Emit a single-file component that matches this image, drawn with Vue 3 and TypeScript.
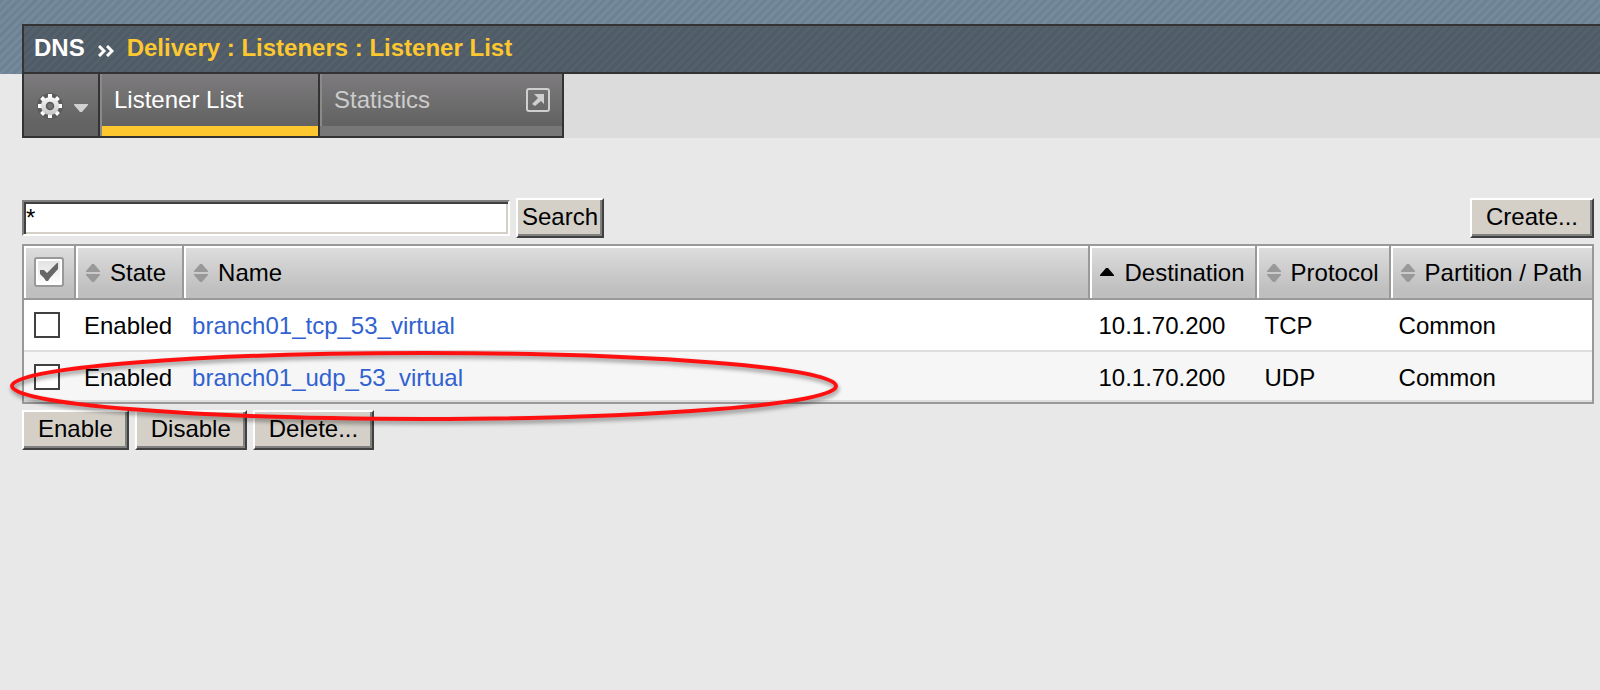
<script setup lang="ts">
import { ref } from 'vue'

interface Listener {
  id: string
  state: string
  name: string
  destination: string
  protocol: string
  partition: string
  selected: boolean
}

interface Column {
  key: string
  label: string
  sorted: boolean
}

const query = ref('*')

const columns: Column[] = [
  { key: 'state', label: 'State', sorted: false },
  { key: 'name', label: 'Name', sorted: false },
  { key: 'destination', label: 'Destination', sorted: true },
  { key: 'protocol', label: 'Protocol', sorted: false },
  { key: 'partition', label: 'Partition / Path', sorted: false },
]

const listeners = ref<Listener[]>([
  { id: 'tcp', state: 'Enabled', name: 'branch01_tcp_53_virtual', destination: '10.1.70.200', protocol: 'TCP', partition: 'Common', selected: false },
  { id: 'udp', state: 'Enabled', name: 'branch01_udp_53_virtual', destination: '10.1.70.200', protocol: 'UDP', partition: 'Common', selected: false },
])

const actions = ['Enable', 'Disable', 'Delete...']
const teeth = [0, 45, 90, 135, 180, 225, 270, 315]

function toggleAll(): void {
  const next = !listeners.value.every((l) => l.selected)
  listeners.value.forEach((l) => { l.selected = next })
}
</script>

<template>
  <div class="page">
    <header class="banner">
      <h1 class="crumbs">
        <span>DNS</span>
        <svg class="chevrons" width="16" height="12" viewBox="0 0 16 12" aria-hidden="true">
          <path d="M1 1l5 5-5 5M9 1l5 5-5 5" fill="none" stroke="#fff" stroke-width="3" />
        </svg>
        <span class="trail">Delivery : Listeners : Listener List</span>
      </h1>
    </header>

    <div class="tab-strip">
      <nav class="tabs" aria-label="Listener pages">
        <button class="gear" type="button" aria-label="Options">
          <svg width="28" height="28" viewBox="0 0 28 28" aria-hidden="true">
            <defs>
              <linearGradient id="gearFill" x1="0" y1="0" x2="0" y2="28" gradientUnits="userSpaceOnUse">
                <stop offset="0.1" stop-color="#ffffff" />
                <stop offset="1" stop-color="#b4b4b4" />
              </linearGradient>
            </defs>
            <circle cx="14" cy="14" r="11" fill="none" stroke="#5c5c5c" stroke-width="4" />
            <g fill="url(#gearFill)">
              <path
                v-for="angle in teeth"
                :key="angle"
                d="M12 6V2h4v4z"
                :transform="`rotate(${angle} 14 14)`"
              />
              <circle cx="14" cy="14" r="9" />
            </g>
            <circle cx="14" cy="14" r="3.500" fill="#727272" stroke="#5a5a5a" stroke-width="1.500" />
          </svg>
          <svg class="caret" width="14" height="8" viewBox="0 0 14 8" aria-hidden="true">
            <path d="M0 0h14v1L8 8H6L0 1z" fill="#d0d0d0" />
          </svg>
        </button>
        <a class="tab active" href="#list">Listener List</a>
        <a class="tab stats" href="#statistics">
          <span>Statistics</span>
          <svg width="24" height="24" viewBox="0 0 24 24" aria-hidden="true">
            <rect x="1" y="1" width="22" height="22" rx="2" fill="none" stroke="#cfcfcf" stroke-width="2" />
            <path d="M8 6h10v10l-3-3-6 5-3-2 6-6z" fill="#cfcfcf" />
          </svg>
        </a>
      </nav>
    </div>

    <main class="content">
      <form class="toolbar" @submit.prevent>
        <input v-model="query" class="search" type="text" aria-label="Search listeners" />
        <button class="btn find" type="submit">Search</button>
        <button class="btn create" type="button">Create...</button>
      </form>

      <div class="listing">
        <table class="grid">
          <thead>
            <tr>
              <th class="pick" scope="col">
                <button class="check-all" type="button" aria-label="Select all" @click="toggleAll">
                  <svg width="20" height="20" viewBox="0 0 20 20" aria-hidden="true">
                    <path d="M1 8h4l3 3 8-8 2-2h1v6l-8 9-2 3H7l-2-3-4-4z" fill="#666" />
                  </svg>
                </button>
              </th>
              <th v-for="col in columns" :key="col.key" scope="col" :class="col.key">
                <button class="sort" type="button">
                  <svg width="14" height="18" viewBox="0 0 14 18" aria-hidden="true">
                    <path v-if="col.sorted" d="M0 12v-1l6-7h2l6 7v1z" fill="#000" />
                    <path v-else d="M0 8V7l6-7h2l6 7v1zM0 10v1l6 7h2l6-7v-1z" fill="#999" />
                  </svg>
                  <span>{{ col.label }}</span>
                </button>
              </th>
            </tr>
          </thead>
          <tbody>
            <tr v-for="item in listeners" :key="item.id">
              <td class="pick">
                <input v-model="item.selected" class="box" type="checkbox" :aria-label="`Select ${item.name}`" />
              </td>
              <td>{{ item.state }}</td>
              <td><a class="name-link" :href="`#${item.id}`">{{ item.name }}</a></td>
              <td>{{ item.destination }}</td>
              <td>{{ item.protocol }}</td>
              <td>{{ item.partition }}</td>
            </tr>
          </tbody>
        </table>
        <svg class="marker" width="832" height="78" viewBox="0 0 832 78" aria-hidden="true">
          <ellipse cx="414" cy="36" rx="412" ry="33" fill="none" stroke="#ff1010" stroke-width="4" />
        </svg>
      </div>

      <div class="actions">
        <button v-for="action in actions" :key="action" class="btn" type="button">{{ action }}</button>
      </div>
    </main>
  </div>
</template>

<style>
body {
  margin: 0;
  background: #e8e8e8;
}
</style>

<style scoped>
.page {
  min-height: 100vh;
  background: #e8e8e8;
  color: #000;
  font: 24px/28px "Liberation Sans", Arial, sans-serif;
}

button,
input {
  box-sizing: border-box;
  margin: 0;
  font: inherit;
  color: inherit;
}

button {
  cursor: pointer;
}

.banner {
  padding: 24px 0 0 22px;
  background: repeating-linear-gradient(135deg, #6c8397 0 3px, #768a99 3px 6px);
}

.crumbs {
  display: flex;
  align-items: center;
  box-sizing: border-box;
  height: 50px;
  margin: 0;
  padding: 0 10px 2px;
  border: 2px solid #333;
  border-right: 0;
  background: repeating-linear-gradient(135deg, #4f5b66 0 3px, #54606a 3px 6px);
  color: #fff;
  font-size: 24px;
  font-weight: bold;
}

.chevrons {
  margin: 6px 13px 0;
}

.trail {
  color: #fdc82f;
}

.tab-strip {
  padding-left: 22px;
  background: linear-gradient(90deg, #e8e8e8 22px, #dcdcdc 22px);
}

.tabs {
  display: flex;
  width: fit-content;
  height: 62px;
  border: 2px solid #333;
  border-top: 0;
}

.gear {
  display: flex;
  align-items: center;
  gap: 10px;
  width: 74px;
  padding: 2px 10px 0 12px;
  border: 0;
  background: linear-gradient(#7d7b7d, #636363 80%);
}

.caret {
  margin-top: 4px;
}

.tab {
  display: flex;
  justify-content: space-between;
  box-sizing: border-box;
  padding: 12px 12px 0 14px;
  border-left: 2px solid #333;
  background:
    linear-gradient(#777, #777) bottom / 100% 10px no-repeat,
    linear-gradient(90deg, #8a8a8a, #8a8a8a) left / 2px 100% no-repeat,
    linear-gradient(#7d7b7d, #636363 80%);
  color: #ccc;
  text-decoration: none;
}

.tab.active {
  width: 220px;
  background:
    linear-gradient(90deg, #8a8a8a, #8a8a8a) left / 2px 100% no-repeat,
    linear-gradient(#fdc82f, #fdc82f) bottom / 100% 10px no-repeat,
    linear-gradient(#7d7b7d, #636363 80%);
  color: #fff;
}

.tab.stats {
  width: 244px;
}

.tab svg {
  margin-top: 2px;
}

.content {
  padding: 60px 6px 0 22px;
}

.toolbar {
  display: flex;
  align-items: center;
  gap: 6px;
  margin-bottom: 6px;
}

.search {
  width: 488px;
  height: 36px;
  padding: 0 2px;
  border: 2px solid;
  border-color: #808080 #fff #fff #808080;
  outline: 0;
  background: #fff;
  box-shadow: inset 2px 2px #404040, inset -2px -2px #d4d0c8;
}

.btn {
  height: 40px;
  padding: 0 14px 2px;
  border: 2px solid;
  border-color: #fff #404040 #404040 #fff;
  background: #d4d0c8;
  box-shadow: inset -2px -2px #808080;
}

.find {
  padding: 0 4px 2px;
}

.create {
  margin-left: auto;
}

.listing {
  position: relative;
}

.grid {
  width: 100%;
  border: 2px solid #999;
  border-spacing: 0;
  background: #fff;
}

th {
  height: 50px;
  padding: 2px 10px 0;
  border-right: 2px solid #999;
  border-bottom: 2px solid #999;
  background: linear-gradient(#dedede, #bfbfbf 85%);
  box-shadow: inset 2px 2px #fff;
  font-weight: normal;
  text-align: left;
  white-space: nowrap;
}

th:last-child {
  border-right: 0;
}

td {
  height: 48px;
  padding: 2px 12px 0 8px;
  border-bottom: 2px solid #ddd;
  white-space: nowrap;
}

tbody tr:nth-child(even) td {
  height: 44px;
  padding-top: 4px;
  background: #f6f6f6;
}

th.pick,
td.pick {
  width: 30px;
  padding: 0 10px;
}

tbody tr:nth-child(even) td.pick {
  padding-top: 2px;
}

th.name {
  width: 100%;
}

.sort {
  display: flex;
  align-items: center;
  gap: 10px;
  padding: 0;
  border: 0;
  background: none;
}

.check-all {
  display: grid;
  place-items: center;
  width: 30px;
  height: 30px;
  padding: 0;
  border: 2px solid #999;
  border-radius: 3px;
  background: linear-gradient(#e0e0e0, #fff);
  box-shadow: inset 0 0 0 2px #fff;
}

.box {
  display: block;
  appearance: none;
  width: 26px;
  height: 26px;
  border: 2px solid #404040;
  background: #fff;
}

.box:checked {
  box-shadow: inset 0 0 0 4px #fff;
  background: #404040;
}

.name-link {
  color: #3162d0;
  text-decoration: none;
}

.marker {
  position: absolute;
  top: 106px;
  left: -12px;
  filter: drop-shadow(1px 3px 2px rgb(0 0 0 / 40%));
  pointer-events: none;
}

.actions {
  display: flex;
  gap: 6px;
  margin-top: 6px;
}
</style>
